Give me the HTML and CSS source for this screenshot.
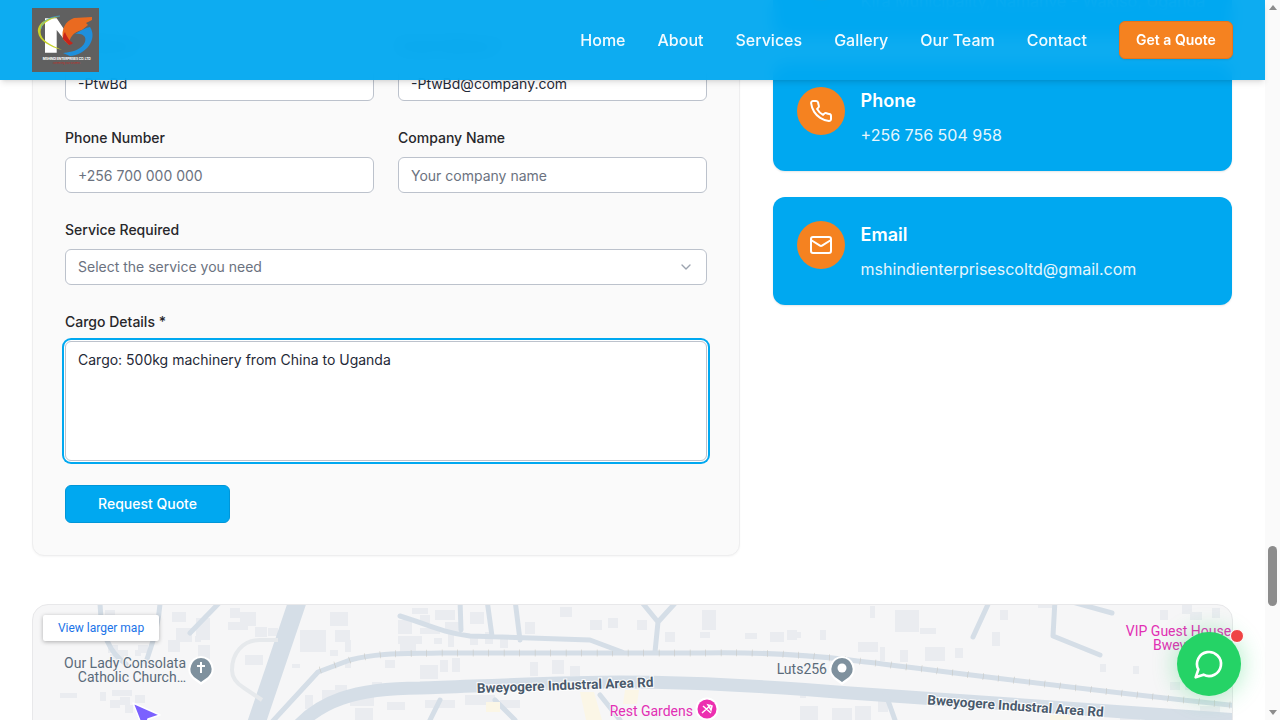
FILE: index.html
```html
<!DOCTYPE html>
<html lang="en">
<head>
<meta charset="utf-8">
<title>Contact - Mshindi Enterprises</title>
<link rel="stylesheet" href="styles.css">
</head>
<body>
<div class="page">
  <header class="site-header">
    <svg class="logo" viewBox="0 0 67 64" aria-label="Mshindi Enterprises logo">
      <rect width="67" height="64" fill="#606060"/>
      <path d="M13 10.300h11.700l10 15-.7 8.400-9.300-11.700v22.700H13z" fill="#fff"/>
      <path d="M28 8.500C14 9 5 16 6 24c1 9 12 15 24 18-11-5-21.500-10-21.500-18 0-8 8.500-13 19.500-15.500z" fill="#c8d32a"/>
      <path d="M28 8C16 9 9 14 9 21" fill="none" stroke="#3fa9e0" stroke-width=".7"/>
      <path d="M60 9 42 10C33 13 29 22 31 31l6 6c0-7 4-13 13-15l6-5-2-2 6-3z" fill="#ea6a20"/>
      <path d="M33 24c-2 3-2 5-2 7l6 6c1 0 3-1 4-2-2-1-6-5-8-11z" fill="#c8241a"/>
      <path d="M58 19C66 31 54 47 38 48l-7-3c11-1 19-4 22-11 2-6-3-9-10-8 5-3 10-6 15-7z" fill="#1f8fdc"/>
      <text x="10.700" y="52" class="logo-name" textLength="48">MSHINDI ENTERPRISES CO. LTD</text>
      <text x="21" y="55.500" class="logo-tag" textLength="27">Connecting your business</text>
    </svg>
    <nav class="main-nav">
      <a href="#">Home</a>
      <a href="#">About</a>
      <a href="#">Services</a>
      <a href="#">Gallery</a>
      <a href="#">Our Team</a>
      <a href="#">Contact</a>
      <a href="#" class="quote-btn">Get a Quote</a>
    </nav>
  </header>

  <main class="content">
    <div class="contact-grid">
      <section class="form-card">
        <form class="form-grid">
          <div class="field">
            <label>Full Name *</label>
            <input class="control" type="text" value="-PtwBd">
          </div>
          <div class="field">
            <label>Email Address *</label>
            <input class="control" type="text" value="-PtwBd@company.com">
          </div>
          <div class="field">
            <label>Phone Number</label>
            <input class="control" type="text" placeholder="+256 700 000 000">
          </div>
          <div class="field">
            <label>Company Name</label>
            <input class="control" type="text" placeholder="Your company name">
          </div>
          <div class="field wide">
            <label>Service Required</label>
            <div class="control select">
              <span>Select the service you need</span>
              <svg class="chevron" viewBox="0 0 24 24"><path d="m6 9 6 6 6-6"/></svg>
            </div>
          </div>
          <div class="field wide">
            <label>Cargo Details *</label>
            <textarea class="control area">Cargo: 500kg machinery from China to Uganda</textarea>
          </div>
          <button class="submit" type="button">Request Quote</button>
        </form>
      </section>

      <aside class="info-col">
        <div class="info-card">
          <span class="info-icon">
            <svg viewBox="0 0 24 24"><path d="M20 10c0 6-8 12-8 12s-8-6-8-12a8 8 0 0 1 16 0Z"/><circle cx="12" cy="10" r="3"/></svg>
          </span>
          <div>
            <p class="address">Kira Municipality, Namanve - Wakiso, Uganda</p>
          </div>
        </div>
        <div class="info-card">
          <span class="info-icon">
            <svg viewBox="0 0 24 24"><path d="M22 16.920v3a2 2 0 0 1-2.180 2 19.790 19.790 0 0 1-8.630-3.070 19.500 19.500 0 0 1-6-6 19.790 19.790 0 0 1-3.070-8.670A2 2 0 0 1 4.110 2h3a2 2 0 0 1 2 1.720 12.840 12.840 0 0 0 .7 2.810 2 2 0 0 1-.45 2.110L8.090 9.910a16 16 0 0 0 6 6l1.270-1.270a2 2 0 0 1 2.110-.45 12.840 12.840 0 0 0 2.810.7A2 2 0 0 1 22 16.920z"/></svg>
          </span>
          <div>
            <h3>Phone</h3>
            <p>+256 756 504 958</p>
          </div>
        </div>
        <div class="info-card">
          <span class="info-icon">
            <svg viewBox="0 0 24 24"><rect x="2" y="4" width="20" height="16" rx="2"/><path d="m22 7-8.970 5.700a1.940 1.940 0 0 1-2.060 0L2 7"/></svg>
          </span>
          <div>
            <h3>Email</h3>
            <p>mshindienterprisescoltd@gmail.com</p>
          </div>
        </div>
      </aside>
    </div>

    <section class="map">
      <svg class="map-canvas" viewBox="32 604 1201 116">
        <path class="bldg" d="M105 610h10v8h-10zM172 612h14v10h-14zM176 628h16v14h-16zM168 640h12v12h-12zM138 645h10v8h-10zM195 636h6v6h-6zM108 645h10v8h-10zM110 654h14v8h-14zM118 650h10v6h-10zM135 650h6v6h-6zM60 693h17v5H60zM100 692h6v9h-6zM112 690h20v6h-20zM120 697h10v8h-10zM135 695h10v8h-10zM110 700h10v8h-10zM125 705h8v8h-8zM196 618h14v22h-14zM198 645h12v14h-12zM230 608h10v10h-10zM240 612h16v14h-16zM228 622h20v8h-20zM255 627h12v10h-12zM268 628h10v8h-10zM300 630h26v22h-26zM335 630h15v12h-15zM330 612h18v14h-18zM345 640h6v12h-6zM330 650h8v6h-8zM245 655h18v10h-18zM292 664h8v4h-8zM345 662h6v6h-6zM385 660h10v8h-10zM350 690h24v16h-24zM372 682h10v14h-10zM395 685h14v8h-14zM387 702h18v8h-18zM305 695h8v14h-8zM322 690h14v14h-14zM335 685h12v12h-12zM355 708h18v12h-18zM398 620h14v14h-14zM400 640h16v14h-16zM412 608h16v6h-16zM420 615h10v8h-10zM420 628h20v6h-20zM398 636h24v8h-24zM435 610h20v10h-20zM445 622h14v10h-14zM470 612h14v12h-14zM434 638h8v6h-8zM448 633h6v14h-6zM470 635h8v10h-8zM485 632h8v12h-8zM500 636h8v12h-8zM525 622h10v12h-10zM560 607h12v10h-12zM420 665h18v14h-18zM440 660h8v12h-8zM452 658h8v14h-8zM530 662h8v14h-8zM552 660h12v14h-12zM570 666h10v10h-10zM425 700h30v8h-30zM465 695h30v10h-30zM500 700h20v8h-20zM590 620h12v10h-12zM608 618h10v10h-10zM637 620h10v10h-10zM665 632h10v10h-10zM700 632h10v6h-10zM702 610h14v20h-14zM745 633h12v6h-12zM770 632h14v10h-14zM787 630h10v10h-10zM820 630h6v10h-6zM795 632h6v6h-6zM800 706h18v14h-18zM832 708h20v12h-20zM855 706h16v14h-16zM878 700h10v12h-10zM800 690h6v8h-6zM895 610h24v22h-24zM920 628h16v6h-16zM870 606h5v12h-5zM858 642h20v10h-20zM880 647h5v14h-5zM900 650h8v12h-8zM925 647h20v14h-20zM955 648h8v10h-8zM992 632h8v14h-8zM1000 610h8v10h-8zM1038 600h16v8h-16zM1100 664h6v8h-6zM1133 666h6v8h-6zM1160 610h8v10h-8zM1182 604h10v10h-10zM1190 612h12v8h-12zM1212 608h8v10h-8zM1170 682h10v8h-10zM1185 684h8v6h-8zM1120 708h20v12h-20zM1160 712h20v8h-20zM1200 706h20v14h-20z"/>
        <path class="road" stroke-width="18" d="M298 600 256 724"/>
        <path class="road" stroke-width="5" d="M190 633 222 600"/>
        <path class="road" stroke-width="5" d="M100 600C100 630 108 652 126 664M160 600C160 625 150 650 146 662"/>
        <path class="ring" d="M278 640h-18c-18 0-28 14-28 30 0 8 4 13 12 18l18 12"/>
        <path class="road" stroke-width="5" d="M272 722 318 672 350 660C380 652 410 654 440 653H700C750 652 800 654 850 660C950 672 1100 692 1240 706"/>
        <path class="rail" d="M320 670 350 660C380 652 410 654 440 653H700C750 652 800 654 850 660C950 672 1100 692 1240 706"/>
        <path class="road" stroke-width="13" d="M300 724C320 704 350 688 420 688C480 686 560 682 620 682C700 682 790 688 850 693C960 700 1100 710 1240 720"/>
        <path class="road" stroke-width="5" d="M400 616C430 625 440 632 470 636L590 640 622 652M460 600 461 630M487 600 492 636M515 600 520 640M640 600 658 622 655 652M678 600 658 622"/>
        <path class="road" stroke-width="5" d="M990 600 973 637M1055 600 1053 636 1100 655M1065 600 1112 613"/>
        <path class="road" stroke-width="5" d="M495 700 515 720M600 695 620 720M440 700 430 720M885 692 895 720"/>
        <path class="sand" d="M580 692h14l8 28h-16zM625 690h14l-2 14h-14zM486 702h14v10h-14zM1050 715h20v5h-20z"/>

        <text class="lbl" x="186" y="668">Our Lady Consolata</text>
        <text class="lbl" x="186" y="682">Catholic Church…</text>
        <text class="lbl" x="827" y="674">Luts256</text>
        <text class="lbl pink" x="693" y="716">Rest Gardens</text>
        <text class="lbl pink mid" x="1178.500" y="636">VIP Guest House</text>
        <text class="lbl pink start" x="1153" y="650">Bweyogere</text>
        <text class="rd" transform="translate(477 693) rotate(-2)">Bweyogere Industral Area Rd</text>
        <text class="rd" transform="translate(927 704.500) rotate(4)">Bweyogere Industral Area Rd</text>

        <path class="pin-w" d="M201 656a13 13 0 0 1 8 23l-8 6-8-6a13 13 0 0 1 8-23z"/>
        <path class="pin-g" d="M201 658a11 11 0 0 1 7 19l-7 5-7-5a11 11 0 0 1 7-19z"/>
        <path d="M200 662h2v3h3v2h-3v6h-2v-6h-3v-2h3z" fill="#fff"/>
        <path class="pin-w" d="M842 656a13 13 0 0 1 8 23l-8 6-8-6a13 13 0 0 1 8-23z"/>
        <path class="pin-g" d="M842 658a11 11 0 0 1 7 19l-7 5-7-5a11 11 0 0 1 7-19z"/>
        <circle cx="842" cy="668" r="4.500" fill="#fff"/>
        <circle cx="707" cy="709" r="11.500" fill="#fff"/>
        <circle cx="707" cy="709" r="9.500" fill="#ec2fb0"/>
        <path d="M702 713l9-8M703 706l8 7M708 705l4 1-1 4z" fill="none" stroke="#fff" stroke-width="1.500"/>
        <path d="M133 703 160 715 148 719 144 731z" fill="#7b61ff" stroke="#fff" stroke-width="1.500" stroke-linejoin="round"/>
      </svg>
      <a href="#" class="map-link">View larger map</a>
    </section>
  </main>

  <a href="#" class="chat-btn" aria-label="Chat on WhatsApp">
    <svg viewBox="0 0 24 24"><path d="M7.900 20A9 9 0 1 0 4 16.100L2 22Z"/></svg>
    <span class="chat-dot"></span>
  </a>
</div>
<div class="scrollbar">
  <span class="arrow up"></span>
  <span class="thumb"></span>
  <span class="arrow down"></span>
</div>
</body>
</html>
```

FILE: styles.css
```css
* { box-sizing: border-box; }
html, body { height: 100%; }
body {
  margin: 0;
  display: flex;
  height: 720px;
  overflow: hidden;
  background: #fff;
  color: #1f2937;
  font-family: Inter, "Liberation Sans", sans-serif;
}
.page { flex: 1; min-width: 0; position: relative; overflow: hidden; }

.scrollbar {
  width: 15px;
  flex: none;
  display: flex;
  flex-direction: column;
  align-items: center;
  background: #fafafa;
}
.arrow { width: 0; height: 0; border-left: 4.500px solid transparent; border-right: 4.500px solid transparent; }
.arrow.up { margin-top: 5px; border-bottom: 5px solid #8c8c8c; }
.arrow.down { margin-top: auto; margin-bottom: 5px; border-top: 5px solid #8c8c8c; }
.thumb { width: 9px; height: 60px; margin-top: 536px; background: #8c8c8c; border-radius: 5px; }

.site-header {
  position: fixed;
  top: 0;
  left: 0;
  width: 1265px;
  height: 80px;
  z-index: 10;
  display: flex;
  align-items: center;
  justify-content: space-between;
  padding: 0 32px;
  background: rgba(0, 168, 240, .95);
  backdrop-filter: blur(8px);
  box-shadow: 0 4px 6px -1px rgba(0,0,0,.1), 0 2px 4px -2px rgba(0,0,0,.1);
}
.logo { width: 67px; height: 64px; display: block; }
.logo-name { font: 700 3.300px Inter, sans-serif; fill: #fff; }
.logo-tag { font: 400 2px Inter, sans-serif; fill: #c8241a; }
.main-nav { display: flex; align-items: center; gap: 32px; }
.main-nav a { color: #fff; text-decoration: none; font-size: 16px; font-weight: 500; line-height: 24px; opacity: .95; }
.main-nav a.quote-btn {
  display: flex;
  align-items: center;
  justify-content: center;
  width: 114px;
  height: 38px;
  background: #f58220;
  border: 1px solid #e9741a;
  border-radius: 6px;
  font-size: 14px;
  font-weight: 600;
  line-height: 20px;
  opacity: 1;
  box-shadow: 0 1px 2px rgba(0,0,0,.1);
}

.content { padding: 0 32px; margin-top: -71px; }
.contact-grid { display: grid; grid-template-columns: 708px 459.600px; column-gap: 32.600px; align-items: start; }

.form-card {
  background: #fafafa;
  border: 1px solid #eeeeef;
  border-radius: 12px;
  padding: 106px 32px 32px;
  box-shadow: 0 1px 2px rgba(0,0,0,.04);
}
.form-grid { display: grid; grid-template-columns: 309px 309px; column-gap: 24px; row-gap: 27px; }
.field { display: flex; flex-direction: column; gap: 9px; }
.wide { grid-column: span 2; }
.field label { font-size: 14px; line-height: 20px; font-weight: 500; color: #27272a; }
.control {
  height: 36px;
  width: 100%;
  padding: 0 12px;
  background: #fff;
  border: 1px solid #bcc2cc;
  border-radius: 6px;
  font: 400 14px/20px Inter, "Liberation Sans", sans-serif;
  color: #1f2937;
  outline: none;
}
.control::placeholder { color: #6b7280; opacity: 1; }
.select { display: flex; align-items: center; justify-content: space-between; color: #6b7280; }
.chevron { width: 16px; height: 16px; fill: none; stroke: #9ca3af; stroke-width: 2; stroke-linecap: round; stroke-linejoin: round; }
.area {
  display: block;
  height: 120px;
  padding: 8px 12px;
  resize: none;
  box-shadow: 0 0 0 1px #fff, 0 0 0 3px #00a8f0;
}
.submit {
  grid-column: span 2;
  width: 165px;
  height: 38px;
  margin-top: -3px;
  background: #00a8f0;
  border: 1px solid #0096d8;
  border-radius: 6px;
  color: #fff;
  font: 500 14px/20px Inter, "Liberation Sans", sans-serif;
}

.info-col { display: flex; flex-direction: column; gap: 26px; }
.info-card {
  display: flex;
  gap: 16px;
  height: 108px;
  padding: 24px;
  background: #00a8f0;
  border-radius: 12px;
  color: #fff;
  box-shadow: 0 1px 2px rgba(0,0,0,.1);
}
.info-card h3 { margin: 0 0 8px; font-size: 18px; line-height: 28px; font-weight: 600; }
.info-card p { margin: 0; font-size: 16px; line-height: 24px; opacity: .9; }
.info-card p.address { margin-top: 36px; }
.info-icon {
  flex: none;
  width: 48px;
  height: 48px;
  border-radius: 50%;
  background: #f58220;
  display: flex;
  align-items: center;
  justify-content: center;
}
.info-icon svg { width: 24px; height: 24px; fill: none; stroke: #fff; stroke-width: 2; stroke-linecap: round; stroke-linejoin: round; }

.map {
  position: relative;
  margin-top: 48px;
  height: 450px;
  background: #f6f6f7;
  border: 1px solid #e8e8ea;
  border-radius: 16px;
  overflow: hidden;
}
.map-canvas { position: absolute; top: -1px; left: -1px; width: 1201px; height: 116px; display: block; }
.bldg { fill: #eaecf0; }
.road { fill: none; stroke: #d5dee7; stroke-linecap: round; stroke-linejoin: round; }
.ring { fill: none; stroke: #e6e9ec; stroke-width: 4; }
.rail { fill: none; stroke: #c6c5bf; stroke-width: 7; stroke-dasharray: .5 15; }
.sand { fill: #fbf6e6; }
.lbl {
  font: 400 14px Roboto, sans-serif;
  fill: #5b6b7a;
  text-anchor: end;
  paint-order: stroke;
  stroke: #f6f6f7;
  stroke-width: 2px;
}
.pink { fill: #e22fb4; }
.mid { text-anchor: middle; }
.start { text-anchor: start; }
.rd {
  font: 700 13.600px Roboto, sans-serif;
  fill: #4a5a6c;
  paint-order: stroke;
  stroke: #fff;
  stroke-width: 2px;
}
.pin-w { fill: #fff; }
.pin-g { fill: #7f919e; }
.map-link {
  position: absolute;
  top: 10px;
  left: 10px;
  width: 116px;
  height: 26px;
  display: flex;
  align-items: center;
  justify-content: center;
  background: #fff;
  border-radius: 2px;
  box-shadow: 0 1px 4px rgba(0,0,0,.3);
  color: #1a73e8;
  font: 400 12px Roboto, sans-serif;
  text-decoration: none;
}

.chat-btn {
  position: fixed;
  left: 1177px;
  top: 632px;
  width: 64px;
  height: 64px;
  border-radius: 50%;
  background: #25d366;
  display: flex;
  align-items: center;
  justify-content: center;
  box-shadow: 0 0 24px rgba(37,211,102,.4);
  z-index: 5;
}
.chat-btn svg { width: 32px; height: 32px; fill: none; stroke: #fff; stroke-width: 2; stroke-linecap: round; stroke-linejoin: round; }
.chat-dot {
  position: absolute;
  top: -3px;
  right: -3px;
  width: 14px;
  height: 14px;
  background: #ef4444;
  border: 1px solid #fff;
  border-radius: 50%;
}
```
